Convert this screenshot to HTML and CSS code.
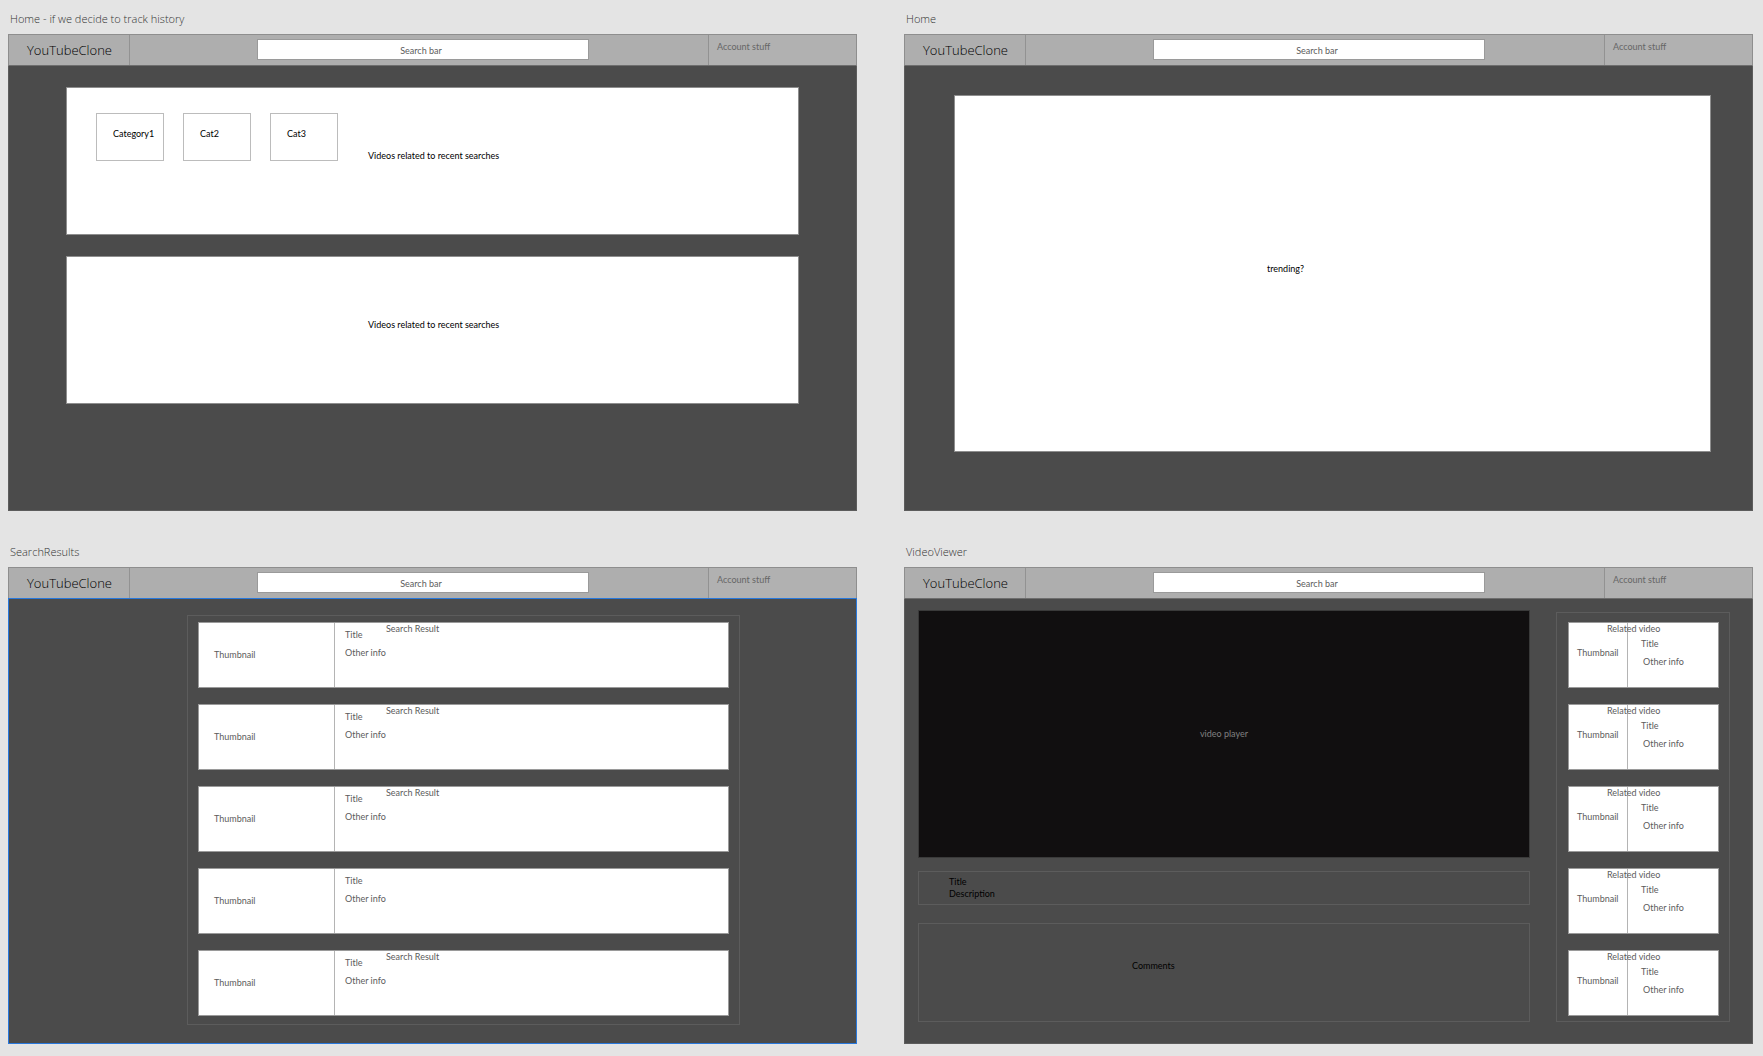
FILE: index.html
```html
<!DOCTYPE html>
<html lang="en">
<head>
<meta charset="utf-8">
<title>YouTubeClone wireframes</title>
<link rel="stylesheet" href="styles.css">
</head>
<body>
<main class="board">

  <section class="artboard">
    <h2 class="artboard-name">Home - if we decide to track history</h2>
    <div class="frame">
      <header class="topbar">
        <a class="brand" href="#">YouTubeClone</a>
        <div class="search-area"><input class="search" type="text" value="Search bar" aria-label="Search"></div>
        <div class="account">Account stuff</div>
      </header>
      <div class="screen home-history">
        <section class="panel recent">
          <div class="categories">
            <button class="category" type="button">Category1</button>
            <button class="category" type="button">Cat2</button>
            <button class="category" type="button">Cat3</button>
          </div>
          <p class="recent-text">Videos related to recent searches</p>
        </section>
        <section class="panel recent recent-plain">
          <p class="recent-text">Videos related to recent searches</p>
        </section>
      </div>
    </div>
  </section>

  <section class="artboard">
    <h2 class="artboard-name">Home</h2>
    <div class="frame">
      <header class="topbar">
        <a class="brand" href="#">YouTubeClone</a>
        <div class="search-area"><input class="search" type="text" value="Search bar" aria-label="Search"></div>
        <div class="account">Account stuff</div>
      </header>
      <div class="screen home">
        <section class="panel trending"><p>trending?</p></section>
      </div>
    </div>
  </section>

  <section class="artboard">
    <h2 class="artboard-name">SearchResults</h2>
    <div class="frame">
      <header class="topbar">
        <a class="brand" href="#">YouTubeClone</a>
        <div class="search-area"><input class="search" type="text" value="Search bar" aria-label="Search"></div>
        <div class="account">Account stuff</div>
      </header>
      <div class="screen results selected">
        <div class="list result-list">
          <article class="card result">
            <div class="thumb">Thumbnail</div>
            <div class="info"><p>Title</p><p>Other info</p></div>
            <p class="tag">Search Result</p>
          </article>
          <article class="card result">
            <div class="thumb">Thumbnail</div>
            <div class="info"><p>Title</p><p>Other info</p></div>
            <p class="tag">Search Result</p>
          </article>
          <article class="card result">
            <div class="thumb">Thumbnail</div>
            <div class="info"><p>Title</p><p>Other info</p></div>
            <p class="tag">Search Result</p>
          </article>
          <article class="card result">
            <div class="thumb">Thumbnail</div>
            <div class="info"><p>Title</p><p>Other info</p></div>
          </article>
          <article class="card result">
            <div class="thumb">Thumbnail</div>
            <div class="info"><p>Title</p><p>Other info</p></div>
            <p class="tag">Search Result</p>
          </article>
        </div>
      </div>
    </div>
  </section>

  <section class="artboard">
    <h2 class="artboard-name">VideoViewer</h2>
    <div class="frame">
      <header class="topbar">
        <a class="brand" href="#">YouTubeClone</a>
        <div class="search-area"><input class="search" type="text" value="Search bar" aria-label="Search"></div>
        <div class="account">Account stuff</div>
      </header>
      <div class="screen viewer">
        <div class="watch">
          <div class="player">video player</div>
          <div class="outline details"><p>Title</p><p>Description</p></div>
          <div class="outline comments">Comments</div>
        </div>
        <aside class="list related-list">
          <article class="card related">
            <div class="thumb">Thumbnail</div>
            <div class="info"><p>Title</p><p class="extra">Other info</p></div>
            <p class="tag">Related video</p>
          </article>
          <article class="card related">
            <div class="thumb">Thumbnail</div>
            <div class="info"><p>Title</p><p class="extra">Other info</p></div>
            <p class="tag">Related video</p>
          </article>
          <article class="card related">
            <div class="thumb">Thumbnail</div>
            <div class="info"><p>Title</p><p class="extra">Other info</p></div>
            <p class="tag">Related video</p>
          </article>
          <article class="card related">
            <div class="thumb">Thumbnail</div>
            <div class="info"><p>Title</p><p class="extra">Other info</p></div>
            <p class="tag">Related video</p>
          </article>
          <article class="card related">
            <div class="thumb">Thumbnail</div>
            <div class="info"><p>Title</p><p class="extra">Other info</p></div>
            <p class="tag">Related video</p>
          </article>
        </aside>
      </div>
    </div>
  </section>

</main>
</body>
</html>
```
FILE: styles.css
```css
* {
  box-sizing: border-box;
}

body {
  margin: 0;
  background: #e4e4e4;
  color: #5c5c5c;
  font: 9px/12px Lato, "Open Sans", sans-serif;
}

h2,
p {
  margin: 0;
}

.board {
  display: grid;
  grid-template-columns: 1fr 1fr;
  gap: 22px 47px;
  padding: 0 10px 12px 8px;
}

.artboard-name {
  padding: 11px 2px 7px;
  color: #333;
  font: 300 11px/16px "Open Sans", sans-serif;
}

.frame {
  display: flex;
  flex-direction: column;
  min-height: 477px;
  background: #4b4b4b;
}

/* Top bar */

.topbar {
  display: grid;
  grid-template-columns: 121px 1fr 148px;
  min-height: 32px;
  border: 1px solid #8e8e8e;
  border-bottom-color: #6e6e6e;
  background: #aeaeae;
}

.brand {
  padding-left: 18px;
  border-right: 1px solid #929292;
  color: #000;
  font: 300 13px/30px "Open Sans", sans-serif;
  text-decoration: none;
}

.search-area {
  display: grid;
  grid-template-columns: 127fr 332fr 119fr;
  align-items: start;
  padding-top: 4px;
}

.search {
  grid-column: 2;
  width: 100%;
  height: 21px;
  padding: 2px 4px 0 0;
  border: 1px solid #9a9a9a;
  border-radius: 0;
  background: #fff;
  color: #5c5c5c;
  font: inherit;
  text-align: center;
}

.account {
  padding: 6px 8px;
  border-left: 1px solid #929292;
  background: #b1b1b1;
  color: #666;
}

/* Screens */

.screen {
  flex: 1;
  border: 1px solid #5c5c5c;
  border-top: 0;
}

.selected {
  margin-top: -1px;
  border: 1px solid #2878dc;
}

.panel {
  border: 1px solid #8e8e8e;
  background: #fff;
  color: #000;
}

.home-history {
  display: flex;
  flex-direction: column;
  gap: 21px;
  padding: 21px 57px;
}

.recent {
  display: flex;
  align-items: flex-start;
  gap: 30px;
  min-height: 148px;
  padding: 25px 29px;
}

.recent-plain {
  padding-left: 301px;
}

.categories {
  display: flex;
  gap: 19px;
}

.category {
  width: 68px;
  height: 48px;
  padding: 0 0 6px 16px;
  border: 1px solid #bcbcbc;
  background: #fff;
  color: #000;
  font: inherit;
  text-align: left;
}

.recent-text {
  padding-top: 37px;
  white-space: nowrap;
}

.home {
  padding: 29px 41px 29px 49px;
}

.trending {
  min-height: 357px;
  padding: 167px 312px;
}

/* Cards */

.list {
  display: flex;
  flex-direction: column;
  gap: 16px;
  border: 1px solid #5c5c5c;
}

.card {
  display: flex;
  min-height: 66px;
  border: 1px solid #9a9a9a;
  background: #fff;
}

.thumb {
  display: flex;
  align-items: center;
  border-right: 1px solid #b4b4b4;
}

.results {
  padding: 16px 116px 18px 178px;
}

.result-list {
  padding: 6px 10px 8px;
}

.result .thumb {
  width: 136px;
  padding-left: 15px;
}

.result .info {
  display: flex;
  flex-direction: column;
  gap: 6px;
  width: 51px;
  padding: 6px 0 0 10px;
  white-space: nowrap;
}

/* Video viewer */

.viewer {
  display: grid;
  grid-template-columns: 1fr 174px;
  gap: 26px;
  padding: 11px 22px 21px 13px;
}

.player {
  display: flex;
  align-items: center;
  justify-content: center;
  height: 248px;
  border: 1px solid #3a3a3a;
  background: #110f10;
  color: #808080;
}

.outline {
  border: 1px solid #5c5c5c;
  color: #000;
}

.details {
  min-height: 34px;
  margin: 13px 0 18px;
  padding: 4px 30px;
}

.comments {
  min-height: 99px;
  padding: 36px 213px;
}

.related-list {
  align-self: start;
  margin-top: 2px;
  padding: 9px 10px 5px 11px;
}

.related {
  position: relative;
}

.related .thumb {
  width: 59px;
  padding: 0 0 4px 8px;
}

.related .info {
  display: flex;
  flex-direction: column;
  gap: 6px;
  padding: 15px 0 0 13px;
}

.related .extra {
  padding-left: 2px;
}

/* The tag sits across the divider between thumbnail and text */
.related .tag {
  position: absolute;
  top: 0;
  left: 38px;
}
```
